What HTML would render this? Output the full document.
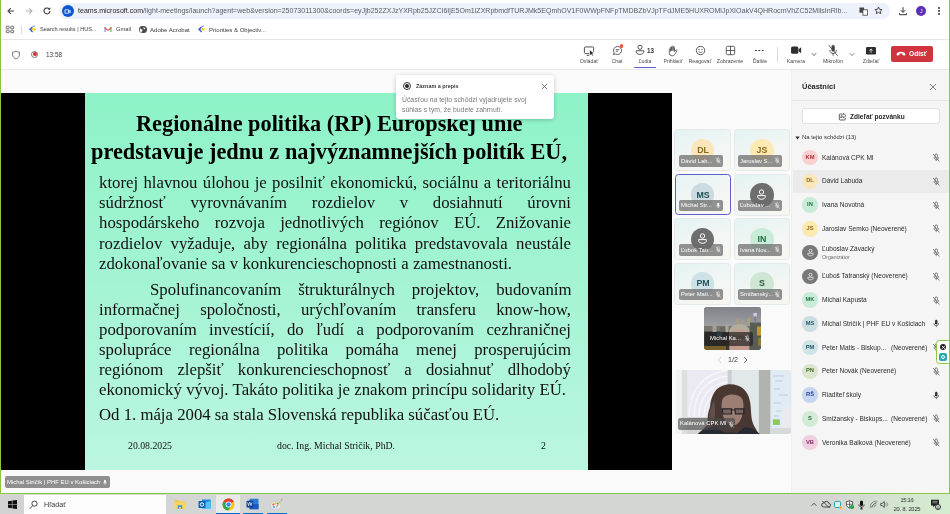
<!DOCTYPE html>
<html><head><meta charset="utf-8">
<style>
*{margin:0;padding:0;box-sizing:border-box}
html,body{width:950px;height:514px;overflow:hidden;background:#fff;font-family:"Liberation Sans",sans-serif;}
#root{position:relative;width:950px;height:514px;overflow:hidden;background:#fff}
.abs{position:absolute}
.t{position:absolute;white-space:nowrap;line-height:1}
.t,.tl,.st,.sh{will-change:transform}
/* browser chrome */
#chrome{left:0;top:0;width:950px;height:39px;background:#fff}
#urlbar{left:59px;top:2.500px;width:831px;height:16.500px;border-radius:8.300px;background:#edf1fa}
#bmline{left:0;top:39px;width:950px;height:1px;background:#e6e6e6}
/* teams bar */
#tbar{left:0;top:40px;width:950px;height:29px;background:#fff}
#tline{left:0;top:69px;width:950px;height:1px;background:#e9e9e9}
#stage{left:0;top:70px;width:791px;height:424px;background:#fafafa}
#black{left:1px;top:93px;width:671px;height:377.400px;background:#000}
#slide{left:85px;top:93px;width:503px;height:377.400px;background:linear-gradient(180deg,#8df3c7 0%,#a4f4d3 50%,#bbf6e0 100%)}
.tl{position:absolute;color:#4c4c4c;font-size:5.250px;line-height:1;white-space:nowrap;transform:translateX(-50%);top:59.100px}
/* slide text */
.st{position:absolute;left:14px;width:472px;font-family:"Liberation Serif",serif;color:#111;font-size:16.75px;line-height:1;white-space:nowrap;text-align:justify;text-align-last:justify}
.sh{position:absolute;font-family:"Liberation Serif",serif;font-weight:bold;color:#000;font-size:22.3px;line-height:1;white-space:nowrap}
/* tiles */
.tile{position:absolute;width:55px;height:41px;border-radius:3px;background:linear-gradient(135deg,#eaf6f3,#eef4f6);border:1px solid #e6ebea}
.av{position:absolute;border-radius:50%;text-align:center;font-weight:bold}
.chip{position:absolute;background:rgba(110,110,110,.85);border-radius:2px;color:#fff;font-size:5.2px;line-height:9px;height:9px;padding:0 2px;white-space:nowrap;overflow:hidden}
/* panel */
#panel{left:790.600px;top:70px;width:159.400px;height:424px;background:#f5f5f5;border-left:1px solid #f0f0f0}
.row{position:absolute;left:796px;width:148px;height:23px}
.pav{position:absolute;left:7px;top:4px;width:15px;height:15px;border-radius:50%;font-size:5.4px;font-weight:bold;line-height:15px;text-align:center}
.pn{position:absolute;left:26px;top:8.5px;font-size:6.3px;line-height:1;color:#333;white-space:nowrap}
.pm{position:absolute;left:137px;top:7px;width:8px;height:9px}
/* taskbar */
#task{left:0;top:494px;width:950px;height:20px;background:linear-gradient(90deg,#d4d6d4 0%,#d4d6d4 88%,#d3e8cf 96%,#d6ecd2 100%)}
</style></head><body><div id="root">

<!-- ============ BROWSER CHROME ============ -->
<div id="chrome" class="abs"></div>
<div id="urlbar" class="abs"></div>
<!-- nav icons -->
<svg class="abs" style="left:6px;top:6px" width="10" height="10" viewBox="0 0 10 10"><path d="M8 5H2.2M4.8 2.2L2 5l2.8 2.8" stroke="#444" stroke-width="1.1" fill="none"/></svg>
<svg class="abs" style="left:24px;top:6px" width="10" height="10" viewBox="0 0 10 10"><path d="M2 5h5.8M5.2 2.2L8 5 5.2 7.8" stroke="#b4b4b4" stroke-width="1.1" fill="none"/></svg>
<svg class="abs" style="left:41.5px;top:6px" width="10" height="10" viewBox="0 0 10 10"><path d="M8 5a3 3 0 1 1-1-2.3" stroke="#333" stroke-width="1.1" fill="none"/><path d="M8.3 1.3v2.5H5.8z" fill="#333"/></svg>
<div class="abs" style="left:61.800px;top:5px;width:12px;height:12px;border-radius:50%;background:#0b57d0"></div>
<svg class="abs" style="left:64.300px;top:7.500px" width="7" height="7" viewBox="0 0 7 7"><path d="M1 1.8h3.6v3.4H1zM4.6 3.5L6.2 2.3v2.4z" stroke="#fff" stroke-width=".8" fill="none"/></svg>
<div class="t" style="left:77.500px;top:7.400px;font-size:7.020px;color:#1f1f1f;letter-spacing:0.015px">teams.microsoft.com<span style="color:#5a5d62">/light-meetings/launch?agent=web&amp;version=25073011300&amp;coords=eyJjb252ZXJzYXRpb25JZCI6IjE5Om1lZXRpbmdfTURJMk5EQmhOV1F0WWpFNFpTMDBZbVJpTFdJME5HUXROMlJpXIOakV4QHRocmVhZC52MilsInRlb...</span></div>
<!-- translate / star -->
<svg class="abs" style="left:858.5px;top:6.5px" width="9" height="9" viewBox="0 0 9 9"><rect x=".5" y=".5" width="4.6" height="5.2" fill="#444"/><rect x="3.9" y="2.8" width="4.6" height="5.4" fill="#fff" stroke="#444" stroke-width=".8"/></svg>
<svg class="abs" style="left:874px;top:6px" width="9" height="9" viewBox="0 0 9 9"><path d="M4.5 1l1.05 2.3 2.5.25-1.9 1.65.55 2.45L4.5 6.4 2.3 7.65l.55-2.45L.95 3.55l2.5-.25z" stroke="#333" stroke-width=".85" fill="none" stroke-linejoin="round"/></svg>
<svg class="abs" style="left:898px;top:6px" width="10" height="10" viewBox="0 0 10 10"><path d="M5 1.2v5M2.8 4.2L5 6.4l2.2-2.2M1.5 7.2v1.5h7V7.2" stroke="#333" stroke-width="1" fill="none"/></svg>
<div class="abs" style="left:916.3px;top:5.8px;width:10px;height:10px;border-radius:50%;background:#5b2eb8;color:#fff;font-size:5px;line-height:10px;text-align:center">J</div>
<div class="abs" style="left:938.3px;top:7px;width:1.5px;height:1.5px;background:#444;border-radius:50%;box-shadow:0 3px 0 #444,0 6px 0 #444"></div>
<!-- bookmarks -->
<svg class="abs" style="left:5px;top:25px" width="10" height="9" viewBox="0 0 10 9"><g stroke="#555" stroke-width=".85" fill="none"><rect x="1.200" y="1.200" width="3" height="2.500" rx=".7"/><rect x="5.700" y="1.200" width="3" height="2.500" rx=".7"/><rect x="1.200" y="5.200" width="3" height="2.500" rx=".7"/><rect x="5.700" y="5.200" width="3" height="2.500" rx=".7"/></g></svg>
<div class="abs" style="left:21px;top:25.500px;width:1px;height:8px;background:#cdd9f3"></div>
<svg class="abs" style="left:28px;top:25.300px" width="9" height="9" viewBox="0 0 9 9"><path d="M1 4.2l3-2.6 1 .5-1.6 2.4 1.7 2.2-1 .7z" fill="#3b5bd0"/><path d="M3.8 3.2h4l-.5 2.2H4.6z" fill="#f5d400"/><path d="M4.5 1l2.4-.6-.8 1.5z" fill="#3b5bd0"/></svg>
<div class="t" style="left:39.5px;top:27.300px;font-size:5.580px;color:#3c3c3c">Search results | HUS...</div>
<svg class="abs" style="left:104px;top:26.300px" width="8" height="7" viewBox="0 0 8 7"><path d="M.6 6V1l1 .1v5z" fill="#4285f4"/><path d="M7.4 6V1l-1 .1v5z" fill="#34a853"/><path d="M.6 1L4 3.7 7.4 1l-.2 1.6L4 5 .8 2.6z" fill="#ea4335"/></svg>
<div class="t" style="left:115.5px;top:27.200px;font-size:5.750px;color:#3c3c3c">Gmail</div>
<div class="abs" style="left:139px;top:25.800px;width:7.6px;height:7.6px;border-radius:50%;background:#4a4a4a"></div>
<svg class="abs" style="left:139px;top:25.800px" width="7.6" height="7.6" viewBox="0 0 8 8"><path d="M1.2 2.6c1 .2 1.4 1 2.2 1.2.6.3.3 1.4-.4 1.6-.4.5-.2 1.6-.8 1.6C1 6 .4 4 1.2 2.600zM5 1c.2.7 1.300.7 1.500 1.500.5.700-.5 1.200-1 .9C4.700 3 4.300 1.800 5 1z" fill="#fff"/></svg>
<div class="t" style="left:149.5px;top:27.100px;font-size:6.050px;color:#3c3c3c">Adobe Acrobat</div>
<svg class="abs" style="left:197px;top:25.300px" width="9" height="9" viewBox="0 0 9 9"><path d="M1 4.2l3-2.6 1 .5-1.600 2.400 1.700 2.200-1 .7z" fill="#3b5bd0"/><path d="M3.8 3.200h4l-.5 2.200H4.600z" fill="#f5d400"/><path d="M4.500 1l2.400-.6-.8 1.500z" fill="#3b5bd0"/></svg>
<div class="t" style="left:208.5px;top:27.100px;font-size:6px;color:#3c3c3c">Priorities &amp; Objectiv...</div>
<div id="bmline" class="abs"></div>

<!-- ============ TEAMS BAR ============ -->
<div id="tbar" class="abs"></div>
<div id="tline" class="abs"></div>
<!-- left: shield, rec, time -->
<svg class="abs" style="left:11px;top:49.500px" width="10" height="10" viewBox="0 0 10 10"><path d="M5 1c1.200.8 2.300 1.100 3.400 1.200v2.600c0 2-1.500 3.300-3.400 4.200-1.900-.9-3.400-2.200-3.400-4.200V2.200C2.700 2.100 3.800 1.800 5 1z" stroke="#555" stroke-width=".8" fill="none"/></svg>
<div class="abs" style="left:30.800px;top:50.600px;width:7.600px;height:7.600px;border-radius:50%;border:1px solid #777"></div>
<div class="abs" style="left:32.600px;top:52.400px;width:4px;height:4px;border-radius:50%;background:#d92c2c"></div>
<div class="t" style="left:46.200px;top:52.100px;font-size:6.400px;color:#444">13:58</div>
<!-- toolbar icons -->
<svg class="abs" style="left:582.900px;top:44.800px" width="11.800" height="11.800" viewBox="0 0 11 11"><path d="M6 8H2.300a1 1 0 0 1-1-1V2.800a1 1 0 0 1 1-1h6.600a1 1 0 0 1 1 1v3.400M3.500 9.700h2.300" stroke="#444" stroke-width=".85" fill="none"/><path d="M6.300 4.800l3.700 3-1.600.2.900 1.600-.7.400-.9-1.600-1.100 1.100z" fill="#333"/></svg>
<div class="tl" style="left:589.400px">Ovládať</div>
<svg class="abs" style="left:611.500px;top:45px" width="11" height="11" viewBox="0 0 11 11"><path d="M5.500 1.500a4 4 0 1 1-1.900 7.500l-2.100.6.600-2A4 4 0 0 1 5.500 1.500z" stroke="#444" stroke-width=".85" fill="none"/><path d="M3.800 4.600h3.400M3.800 6.200h2.300" stroke="#444" stroke-width=".8"/></svg>
<div class="abs" style="left:619.700px;top:44.400px;width:3.200px;height:3.200px;border-radius:50%;background:#e8502f"></div>
<div class="tl" style="left:617px">Chat</div>
<svg class="abs" style="left:634px;top:44.300px" width="12" height="12" viewBox="0 0 11 11"><circle cx="5.500" cy="3" r="1.900" stroke="#444" stroke-width=".85" fill="none"/><path d="M2 6.200h7v.8c0 1.600-1.500 2.500-3.500 2.500S2 8.600 2 7z" stroke="#444" stroke-width=".85" fill="none"/></svg>
<div class="t" style="left:647.300px;top:47.600px;font-size:6.300px;font-weight:bold;color:#333">13</div>
<div class="tl" style="left:644.600px">Ľudia</div>
<div class="abs" style="left:633.500px;top:66.600px;width:22.500px;height:1.600px;border-radius:1px;background:#5b5fc7"></div>
<svg class="abs" style="left:666.500px;top:44.500px" width="11" height="12" viewBox="0 0 11 12"><path d="M3.300 6.500V2.600a.7.700 0 0 1 1.400 0V5.500M4.700 5.300V1.900a.7.700 0 0 1 1.400 0v3.400M6.100 5.300V2.400a.7.700 0 0 1 1.400 0v3.800M7.500 6.400l1.100-1.300a.7.700 0 0 1 1.100.9L8.300 8.800c-.7 1.300-1.600 2-3 2-1.800 0-3-1.200-3-3V4.600a.7.700 0 0 1 1.400 0" stroke="#444" stroke-width=".8" fill="none" stroke-linecap="round"/></svg>
<div class="tl" style="left:672.500px">Prihlásiť</div>
<svg class="abs" style="left:694.500px;top:45px" width="11" height="11" viewBox="0 0 11 11"><circle cx="5.500" cy="5.500" r="4.200" stroke="#444" stroke-width=".85" fill="none"/><circle cx="4" cy="4.400" r=".6" fill="#444"/><circle cx="7" cy="4.400" r=".6" fill="#444"/><path d="M3.600 6.600c1 1.200 2.800 1.200 3.800 0" stroke="#444" stroke-width=".8" fill="none"/></svg>
<div class="tl" style="left:700px">Reagovať</div>
<svg class="abs" style="left:724.500px;top:45px" width="11" height="11" viewBox="0 0 11 11"><rect x="1.300" y="1.300" width="8.400" height="8.400" rx="1.300" stroke="#444" stroke-width=".85" fill="none"/><path d="M5.500 1.300v8.400M1.300 5.500h8.400" stroke="#444" stroke-width=".85"/></svg>
<div class="tl" style="left:729.800px">Zobrazenie</div>
<div class="abs" style="left:755.300px;top:49.700px;width:1.800px;height:1.800px;border-radius:50%;background:#333;box-shadow:3.300px 0 0 #333,6.600px 0 0 #333"></div>
<div class="tl" style="left:759.500px">Ďalšie</div>
<div class="abs" style="left:777px;top:46.500px;width:1px;height:15.500px;background:#dcdcdc"></div>
<svg class="abs" style="left:790px;top:45.300px" width="12.500" height="10.400" viewBox="0 0 12 10"><rect x="1" y="1.500" width="7" height="7" rx="1.500" fill="#2e2e2e"/><path d="M8.300 4l2.400-1.900v5.800L8.300 6z" fill="#2e2e2e"/></svg>
<div class="tl" style="left:795.800px">Kamera</div>
<svg class="abs" style="left:810.500px;top:51.500px" width="6" height="5" viewBox="0 0 6 5"><path d="M.8 1.200L3 3.600l2.200-2.400" stroke="#444" stroke-width=".8" fill="none"/></svg>
<svg class="abs" style="left:827.300px;top:44px" width="12.300" height="13.400" viewBox="0 0 11 12"><rect x="4" y="1" width="3" height="5.800" rx="1.500" fill="#444"/><path d="M2.600 5.500c0 1.800 1.200 3 2.900 3s2.900-1.200 2.900-3M5.500 8.500v2" stroke="#444" stroke-width=".8" fill="none"/><path d="M1.500 1l8 9.500" stroke="#444" stroke-width=".8"/></svg>
<div class="tl" style="left:833.400px">Mikrofón</div>
<svg class="abs" style="left:848.500px;top:51.500px" width="6" height="5" viewBox="0 0 6 5"><path d="M.8 1.200L3 3.600l2.200-2.400" stroke="#555" stroke-width=".7" fill="none"/></svg>
<svg class="abs" style="left:865px;top:45.500px" width="12" height="10" viewBox="0 0 12 10"><rect x="1" y="1" width="10" height="7.600" rx="1.300" fill="#2e2e2e"/><path d="M6 6.800V3M4.400 4.500L6 2.900l1.600 1.600" stroke="#fff" stroke-width=".8" fill="none"/></svg>
<div class="tl" style="left:871px">Zdieľať</div>
<div class="abs" style="left:890.600px;top:46.400px;width:42.600px;height:15.400px;border-radius:2px;background:#d0343f"></div>
<svg class="abs" style="left:896px;top:51px" width="10" height="6" viewBox="0 0 10 6"><path d="M.6 3.600C.5 1.800 2.800.8 5 .8s4.500 1 4.400 2.800c0 .8-.4 1.100-1 1l-1.300-.3c-.5-.1-.7-.5-.7-1.100v-.6c-.9-.3-1.900-.3-2.800 0v.6c0 .6-.2 1-.7 1.100l-1.300.3c-.6.100-1-.2-1-1z" fill="#fff"/></svg>
<div class="t" style="left:909.300px;top:50.800px;font-size:6.600px;font-weight:bold;color:#fff">Odísť</div>

<!-- ============ STAGE ============ -->
<div id="stage" class="abs"></div>
<div id="black" class="abs"></div>
<div id="slide" class="abs">
<div class="sh" style="left:50.5px;top:20.2px;width:386.5px;text-align-last:justify">Regionálne politika (RP) Európskej únie</div>
<div class="sh" style="left:6px;top:47.6px;width:476px;text-align-last:justify">predstavuje jednu z najvýznamnejších politík EÚ,</div>
<div class="st" style="top:82.0px">ktorej hlavnou úlohou je posilniť ekonomickú, sociálnu a teritoriálnu</div>
<div class="st" style="top:102.0px">súdržnosť vyrovnávaním rozdielov v dosiahnutí úrovni</div>
<div class="st" style="top:122.0px">hospodárskeho rozvoja jednotlivých regiónov EÚ. Znižovanie</div>
<div class="st" style="top:143px">rozdielov vyžaduje, aby regionálna politika predstavovala neustále</div>
<div class="st" style="top:163px;width:413px">zdokonaľovanie sa v konkurencieschopnosti a zamestnanosti.</div>
<div class="st" style="top:189px;left:64.500px;width:421.500px">Spolufinancovaním štrukturálnych projektov, budovaním</div>
<div class="st" style="top:209px">informačnej spoločnosti, urýchľovaním transferu know-how,</div>
<div class="st" style="top:229px">podporovaním investícií, do ľudí a podporovaním cezhraničnej</div>
<div class="st" style="top:249px">spolupráce regionálna politika pomáha menej prosperujúcim</div>
<div class="st" style="top:269px">regiónom zlepšiť konkurencieschopnosť a dosiahnuť dlhodobý</div>
<div class="st" style="top:289px;width:467px">ekonomický vývoj. Takáto politika je znakom princípu solidarity EÚ.</div>
<div class="st" style="top:314px;width:400px">Od 1. mája 2004 sa stala Slovenská republika súčasťou EÚ.</div>
<div class="st" style="top:348.400px;left:42.7px;width:43.8px;font-size:9.75px">20.08.2025</div>
<div class="st" style="top:348.400px;left:192.3px;width:118px;font-size:9.75px">doc. Ing. Michal Stričík, PhD.</div>
<div class="st" style="top:348.400px;left:455.5px;width:5px;font-size:9.75px">2</div>
</div>
<!-- popup -->
<div class="abs" style="left:396px;top:74.5px;width:158px;height:44px;background:#fff;border-radius:3.5px;box-shadow:0 1px 4px rgba(0,0,0,.22)"></div>
<div class="abs" style="left:403px;top:82px;width:8.4px;height:8.4px;border-radius:50%;border:1px solid #333"></div>
<div class="abs" style="left:405px;top:84px;width:4.4px;height:4.4px;border-radius:50%;background:#222"></div>
<div class="t" style="left:416.300px;top:83.900px;font-size:5.450px;font-weight:bold;color:#3a3a3a">Záznam a prepis</div>
<svg class="abs" style="left:540.5px;top:82.5px" width="7" height="7" viewBox="0 0 7 7"><path d="M0.8 0.8L6.2 6.2M6.2 0.8L0.8 6.2" stroke="#555" stroke-width="0.8" fill="none"/></svg>
<div class="t" style="left:402.3px;top:97.100px;font-size:6.850px;color:#7a7a7a">Účasťou na tejto schôdzi vyjadrujete svoj</div>
<div class="t" style="left:402.3px;top:106.700px;font-size:6.850px;color:#7a7a7a">súhlas s tým, že budete zahrnutí.</div>

<!-- ============ PANEL ============ -->
<div class="abs" style="left:674.4px;top:129.4px;width:56.8px;height:41.5px;border-radius:3.5px;border:1px solid #e4eaea;background:linear-gradient(160deg,#e4f3f3,#f2f6f4 55%,#f8f6f1)"></div>
<div class="abs" style="left:690.8px;top:138.6px;width:23.6px;height:23.6px;border-radius:50%;background:#fbe5bb"></div>
<div class="t" style="left:687.6px;top:145.8px;width:30px;text-align:center;font-size:8.8px;font-weight:bold;color:#8a6a1c">DL</div>
<div class="abs" style="left:678.7px;top:155.0px;width:44.2px;height:11.7px;border-radius:2px;background:rgba(108,108,108,.74)"></div>
<div class="t" style="left:680.7px;top:158.6px;font-size:5.9px;color:#fff">Dávid Lab...</div>
<svg class="abs" style="left:715.0px;top:157.2px" width="6.5" height="7.2" viewBox="0 0 10 11"><rect x="3.7" y="1" width="2.6" height="5.2" rx="1.3" fill="none" stroke="#fff" stroke-width=".8"/><path d="M2.3 5c0 1.700 1.100 2.800 2.700 2.800S7.700 6.700 7.700 5M5 7.800v1.800" stroke="#fff" stroke-width=".8" fill="none"/><path d="M1.300 1.200l7.400 8.800" stroke="#fff" stroke-width=".8"/></svg>
<div class="abs" style="left:733.6px;top:129.4px;width:56.8px;height:41.5px;border-radius:3.5px;border:1px solid #e4eaea;background:linear-gradient(160deg,#e4f3f3,#f2f6f4 55%,#f8f6f1)"></div>
<div class="abs" style="left:750.0px;top:138.6px;width:23.6px;height:23.6px;border-radius:50%;background:#fce9b4"></div>
<div class="t" style="left:746.8px;top:145.8px;width:30px;text-align:center;font-size:8.8px;font-weight:bold;color:#8a6a1c">JS</div>
<div class="abs" style="left:737.9px;top:155.0px;width:44.2px;height:11.7px;border-radius:2px;background:rgba(108,108,108,.74)"></div>
<div class="t" style="left:739.9px;top:158.6px;font-size:5.9px;color:#fff">Jaroslav S...</div>
<svg class="abs" style="left:774.2px;top:157.2px" width="6.5" height="7.2" viewBox="0 0 10 11"><rect x="3.7" y="1" width="2.6" height="5.2" rx="1.3" fill="none" stroke="#fff" stroke-width=".8"/><path d="M2.3 5c0 1.700 1.100 2.800 2.700 2.800S7.700 6.700 7.700 5M5 7.800v1.800" stroke="#fff" stroke-width=".8" fill="none"/><path d="M1.300 1.200l7.400 8.800" stroke="#fff" stroke-width=".8"/></svg>
<div class="abs" style="left:674.6px;top:174.3px;width:56.4px;height:41.1px;border-radius:3.5px;border:1.8px solid #5b5fc7;background:linear-gradient(160deg,#e6f4f3,#f4f6f4 60%,#f8f6f2)"></div>
<div class="abs" style="left:690.8px;top:183.3px;width:23.6px;height:23.6px;border-radius:50%;background:#ccdbe0"></div>
<div class="t" style="left:687.6px;top:190.5px;width:30px;text-align:center;font-size:8.8px;font-weight:bold;color:#1f4d58">MS</div>
<div class="abs" style="left:678.7px;top:199.7px;width:44.2px;height:11.7px;border-radius:2px;background:rgba(108,108,108,.74)"></div>
<div class="t" style="left:680.7px;top:203.3px;font-size:5.9px;color:#fff">Michal Str...</div>
<svg class="abs" style="left:715.0px;top:201.9px" width="6.5" height="7.2" viewBox="0 0 10 11"><rect x="3.5" y="1" width="3" height="5.600" rx="1.500" fill="#fff"/><path d="M2.300 5c0 1.700 1.100 2.800 2.700 2.800S7.700 6.700 7.700 5M5 7.800v1.800" stroke="#fff" stroke-width=".8" fill="none"/></svg>
<div class="abs" style="left:733.6px;top:174.1px;width:56.8px;height:41.5px;border-radius:3.5px;border:1px solid #e4eaea;background:linear-gradient(160deg,#e4f3f3,#f2f6f4 55%,#f8f6f1)"></div>
<div class="abs" style="left:750.0px;top:183.3px;width:23.6px;height:23.6px;border-radius:50%;background:#6e6e6e"></div>
<svg style="position:absolute;left:755.3px;top:188.1px" width="13" height="13" viewBox="0 0 12 12"><circle cx="6" cy="3.700" r="2" stroke="#fff" stroke-width=".9" fill="none"/><path d="M2.500 7h7v1c0 1.500-1.500 2.400-3.500 2.400S2.500 9.500 2.500 8z" stroke="#fff" stroke-width=".9" fill="none"/></svg>
<div class="abs" style="left:737.9px;top:199.7px;width:44.2px;height:11.7px;border-radius:2px;background:rgba(108,108,108,.74)"></div>
<div class="t" style="left:739.9px;top:203.3px;font-size:5.9px;color:#fff">Ľuboslav ...</div>
<svg class="abs" style="left:774.2px;top:201.9px" width="6.5" height="7.2" viewBox="0 0 10 11"><rect x="3.7" y="1" width="2.6" height="5.2" rx="1.3" fill="none" stroke="#fff" stroke-width=".8"/><path d="M2.3 5c0 1.700 1.100 2.800 2.700 2.800S7.700 6.700 7.700 5M5 7.800v1.800" stroke="#fff" stroke-width=".8" fill="none"/><path d="M1.300 1.200l7.400 8.800" stroke="#fff" stroke-width=".8"/></svg>
<div class="abs" style="left:674.4px;top:218.4px;width:56.8px;height:41.5px;border-radius:3.5px;border:1px solid #e4eaea;background:linear-gradient(160deg,#e4f3f3,#f2f6f4 55%,#f8f6f1)"></div>
<div class="abs" style="left:690.8px;top:227.6px;width:23.6px;height:23.6px;border-radius:50%;background:#6e6e6e"></div>
<svg style="position:absolute;left:696.1px;top:232.4px" width="13" height="13" viewBox="0 0 12 12"><circle cx="6" cy="3.700" r="2" stroke="#fff" stroke-width=".9" fill="none"/><path d="M2.500 7h7v1c0 1.500-1.500 2.400-3.500 2.400S2.500 9.500 2.500 8z" stroke="#fff" stroke-width=".9" fill="none"/></svg>
<div class="abs" style="left:678.7px;top:244.0px;width:44.2px;height:11.7px;border-radius:2px;background:rgba(108,108,108,.74)"></div>
<div class="t" style="left:680.7px;top:247.6px;font-size:5.9px;color:#fff">Ľuboš Tatr...</div>
<svg class="abs" style="left:715.0px;top:246.2px" width="6.5" height="7.2" viewBox="0 0 10 11"><rect x="3.7" y="1" width="2.6" height="5.2" rx="1.3" fill="none" stroke="#fff" stroke-width=".8"/><path d="M2.3 5c0 1.700 1.100 2.800 2.700 2.800S7.700 6.700 7.700 5M5 7.800v1.800" stroke="#fff" stroke-width=".8" fill="none"/><path d="M1.300 1.200l7.400 8.800" stroke="#fff" stroke-width=".8"/></svg>
<div class="abs" style="left:733.6px;top:218.4px;width:56.8px;height:41.5px;border-radius:3.5px;border:1px solid #e4eaea;background:linear-gradient(160deg,#e4f3f3,#f2f6f4 55%,#f8f6f1)"></div>
<div class="abs" style="left:750.0px;top:227.6px;width:23.6px;height:23.6px;border-radius:50%;background:#c8ecd8"></div>
<div class="t" style="left:746.8px;top:234.8px;width:30px;text-align:center;font-size:8.8px;font-weight:bold;color:#1f6f3d">IN</div>
<div class="abs" style="left:737.9px;top:244.0px;width:44.2px;height:11.7px;border-radius:2px;background:rgba(108,108,108,.74)"></div>
<div class="t" style="left:739.9px;top:247.6px;font-size:5.9px;color:#fff">Ivana Nov...</div>
<svg class="abs" style="left:774.2px;top:246.2px" width="6.5" height="7.2" viewBox="0 0 10 11"><rect x="3.7" y="1" width="2.6" height="5.2" rx="1.3" fill="none" stroke="#fff" stroke-width=".8"/><path d="M2.3 5c0 1.700 1.100 2.800 2.700 2.800S7.700 6.700 7.700 5M5 7.800v1.800" stroke="#fff" stroke-width=".8" fill="none"/><path d="M1.300 1.200l7.400 8.800" stroke="#fff" stroke-width=".8"/></svg>
<div class="abs" style="left:674.4px;top:263.0px;width:56.8px;height:41.5px;border-radius:3.5px;border:1px solid #e4eaea;background:linear-gradient(160deg,#e4f3f3,#f2f6f4 55%,#f8f6f1)"></div>
<div class="abs" style="left:690.8px;top:272.2px;width:23.6px;height:23.6px;border-radius:50%;background:#cde1e6"></div>
<div class="t" style="left:687.6px;top:279.4px;width:30px;text-align:center;font-size:8.8px;font-weight:bold;color:#245560">PM</div>
<div class="abs" style="left:678.7px;top:288.6px;width:44.2px;height:11.7px;border-radius:2px;background:rgba(108,108,108,.74)"></div>
<div class="t" style="left:680.7px;top:292.2px;font-size:5.9px;color:#fff">Peter Mati...</div>
<svg class="abs" style="left:715.0px;top:290.8px" width="6.5" height="7.2" viewBox="0 0 10 11"><rect x="3.7" y="1" width="2.6" height="5.2" rx="1.3" fill="none" stroke="#fff" stroke-width=".8"/><path d="M2.3 5c0 1.700 1.100 2.800 2.700 2.800S7.700 6.700 7.700 5M5 7.800v1.800" stroke="#fff" stroke-width=".8" fill="none"/><path d="M1.300 1.200l7.400 8.800" stroke="#fff" stroke-width=".8"/></svg>
<div class="abs" style="left:733.6px;top:263.0px;width:56.8px;height:41.5px;border-radius:3.5px;border:1px solid #e4eaea;background:linear-gradient(160deg,#e4f3f3,#f2f6f4 55%,#f8f6f1)"></div>
<div class="abs" style="left:750.0px;top:272.2px;width:23.6px;height:23.6px;border-radius:50%;background:#d0e6d5"></div>
<div class="t" style="left:746.8px;top:279.4px;width:30px;text-align:center;font-size:8.8px;font-weight:bold;color:#2a5c35">S</div>
<div class="abs" style="left:737.9px;top:288.6px;width:44.2px;height:11.7px;border-radius:2px;background:rgba(108,108,108,.74)"></div>
<div class="t" style="left:739.9px;top:292.2px;font-size:5.9px;color:#fff">Smižanský...</div>
<svg class="abs" style="left:774.2px;top:290.8px" width="6.5" height="7.2" viewBox="0 0 10 11"><rect x="3.7" y="1" width="2.6" height="5.2" rx="1.3" fill="none" stroke="#fff" stroke-width=".8"/><path d="M2.3 5c0 1.700 1.100 2.800 2.700 2.800S7.700 6.700 7.700 5M5 7.800v1.800" stroke="#fff" stroke-width=".8" fill="none"/><path d="M1.300 1.200l7.400 8.800" stroke="#fff" stroke-width=".8"/></svg>
<div class="abs" style="left:703.8px;top:307.1px;width:57.2px;height:42.6px;border-radius:3px;overflow:hidden;background:#88898e">
<svg width="57.2" height="42.6" viewBox="0 0 57.2 42.6" style="position:absolute;left:0;top:0">
<defs><filter id="b1" x="-10%" y="-10%" width="120%" height="120%"><feGaussianBlur stdDeviation="0.55"/></filter>
<linearGradient id="w1" x1="0" y1="0" x2="0" y2="1"><stop offset="0" stop-color="#7f8086"/><stop offset="1" stop-color="#a2a3a6"/></linearGradient></defs>
<g filter="url(#b1)">
<rect x="-2" y="-2" width="62" height="24" fill="url(#w1)"/>
<rect x="-2" y="19" width="62" height="26" fill="#77776f"/>
<rect x="-2" y="24.500" width="27" height="20" fill="#3b3936"/>
<rect x="-2" y="39" width="24" height="6" fill="#75602c"/>
<rect x="13" y="25.500" width="5" height="4" fill="#4c7db3"/>
<rect x="8.500" y="16" width="4" height="9" fill="#a29f96"/>
<rect x="21.500" y="17.500" width="3" height="8" fill="#aaa698"/>
<rect x="16" y="20" width="5" height="5" fill="#6b6a64"/>
<rect x="46" y="15.500" width="13" height="30" fill="#585c54"/>
<rect x="53" y="19.500" width="5" height="9" fill="#b99b2e"/>
<rect x="54" y="31" width="4" height="8" fill="#8a7a30"/>
<rect x="32.300" y="11.500" width="2" height="6" fill="#a89d80"/>
<rect x="37.500" y="13" width="1.800" height="4.500" fill="#a99e80"/>
<rect x="43.800" y="10.500" width="2.200" height="7" fill="#ada078"/>
<rect x="49.500" y="6" width="3.400" height="3.600" fill="#c9cde6"/>
<rect x="50.500" y="9.500" width="1.500" height="7" fill="#7d7f86"/>
<path d="M25.500 30c-.8-8 3-12.500 10-12.500s10.500 4.500 9.800 12.500l-.5 14h-19z" fill="#bfa091"/>
<path d="M25.300 27c-.5-6.500 3.500-9.800 10.200-9.800s10.600 3.300 10 9.800c-2-3.500-5-4.800-10-4.800s-8.200 1.300-10.200 4.800z" fill="#b3ad9d"/>
<rect x="28" y="28.500" width="15" height="3.500" fill="#a58576"/>
<rect x="27" y="36" width="17" height="7" fill="#c79a8e"/>
</g>
</svg></div>
<div class="abs" style="left:704.5px;top:332px;width:48.3px;height:13.6px;border-radius:2px;background:rgba(34,34,34,.7)"></div>
<div class="t" style="left:709.7px;top:336px;font-size:5.9px;color:#fff">Michal Ka...</div>

<svg class="abs" style="left:743.5px;top:334.8px" width="6.5" height="7.2" viewBox="0 0 10 11"><rect x="3.7" y="1" width="2.6" height="5.2" rx="1.3" fill="none" stroke="#fff" stroke-width=".8"/><path d="M2.3 5c0 1.700 1.100 2.800 2.700 2.800S7.700 6.700 7.700 5M5 7.800v1.800" stroke="#fff" stroke-width=".8" fill="none"/><path d="M1.300 1.200l7.400 8.800" stroke="#fff" stroke-width=".8"/></svg>
<svg class="abs" style="left:716.5px;top:355.5px" width="5" height="8" viewBox="0 0 5 8"><path d="M4 1L1 4l3 3" stroke="#c4c4c4" stroke-width=".8" fill="none"/></svg>
<div class="t" style="left:727.6px;top:356.2px;font-size:7.2px;color:#444">1/2</div>
<svg class="abs" style="left:743px;top:355.5px" width="5" height="8" viewBox="0 0 5 8"><path d="M1 1l3 3-3 3" stroke="#555" stroke-width=".8" fill="none"/></svg>
<div class="abs" style="left:675.9px;top:369.5px;width:114.8px;height:64.2px;border-radius:3px;overflow:hidden;background:#e2e5e8">
<svg width="114.8" height="64.2" viewBox="0 0 114.8 64.2" style="position:absolute;left:0;top:0">
<defs><filter id="b2" x="-10%" y="-10%" width="120%" height="120%"><feGaussianBlur stdDeviation="0.6"/></filter></defs>
<g filter="url(#b2)">
<rect x="-2" y="-2" width="8" height="68" fill="#f1f3f3"/>
<rect x="5.800" y="-2" width="5.600" height="68" fill="#dddfdf"/>
<rect x="11.200" y="-2" width="41" height="50" fill="#ebeaf3"/>
<g stroke="#f7f6fb" stroke-width="1.300" fill="none"><path d="M13 48C13 20 26 4 52 0M18 48C18 24 29 9 52 6M23 48C23 28 33 14 52 12M28 48C28 32 36 20 52 18M33 48C33 36 40 26 52 24"/></g>
<rect x="11.200" y="47" width="41" height="19" fill="#d3d5d3"/>
<rect x="51.700" y="-2" width="32" height="68" fill="#e2e7ea"/>
<rect x="51.700" y="-2" width="4" height="32" fill="#cbcfce"/>
<rect x="82.900" y="-2" width="11.800" height="68" fill="#b1b3af"/>
<rect x="94.500" y="-2" width="22" height="68" fill="#e1ebf3"/>
<g stroke="#b4cbe6" stroke-width=".9" fill="none"><path d="M97 6h11M99 11h8M98 19h6M103 25h9M97 33h8M100 41h6M98 46h5"/></g>
<rect x="105.400" y="36.900" width="11" height="21" fill="#e8ecee"/>
<rect x="96.900" y="49.400" width="7" height="5.500" fill="#8fc75a"/>
<rect x="94.500" y="58" width="22" height="8" fill="#d7dadb"/>
<path d="M22 66c2-5 7-8 10-12-1-6 0-12 2-17 1-12 6-21 17-22.500 12-1.500 21 5 23 17 1.500 8 .5 15 3 22 1 3 4 6 6 12.500z" fill="#493833"/>
<path d="M24 64c3-5 7-7 9-11 0-8 1-16 5-22 2 8 1 20-2 28z" fill="#6a5650" opacity=".8"/>
<path d="M45.500 36c0-9 4-13.500 10.500-13.500S67.500 27 67.500 36c0 10-3.500 19-10.500 19.500S45.500 46 45.500 36z" fill="#9d7e73"/>
<path d="M44 32c1-9 6-13 12-13s11 3.500 12.500 11c-4-4-8-5.500-12.500-5.500S47 26.500 44 32z" fill="#493833"/>
<path d="M46 38.800h9.500v5.200h-8.500zM59 38.800h9v5h-8.500z" stroke="#27252a" stroke-width="1.200" fill="rgba(70,60,70,.4)"/>
<path d="M55.500 40h3.500" stroke="#27252a" stroke-width="1"/>
<path d="M20 66c4-6 13-8.500 19-9.500l9 6 13 .5 8-6c7 1 13 3.500 16 9z" fill="#282931"/>
</g>
</svg></div>
<div class="abs" style="left:678.1px;top:418.4px;width:57.3px;height:11.6px;border-radius:2px;background:rgba(70,70,70,.62)"></div>
<div class="t" style="left:680px;top:421.4px;font-size:5.9px;color:#fff">Kalánová CPK MI</div>

<svg class="abs" style="left:728px;top:420.6px" width="6.5" height="7.2" viewBox="0 0 10 11"><rect x="3.7" y="1" width="2.6" height="5.2" rx="1.3" fill="none" stroke="#fff" stroke-width=".8"/><path d="M2.3 5c0 1.700 1.100 2.800 2.700 2.800S7.700 6.700 7.700 5M5 7.800v1.800" stroke="#fff" stroke-width=".8" fill="none"/><path d="M1.300 1.200l7.400 8.800" stroke="#fff" stroke-width=".8"/></svg>
<div class="abs" style="left:5.2px;top:476.2px;width:104.5px;height:11.5px;border-radius:2px;background:#8f8f8f"></div>
<div class="t" style="left:7px;top:480.2px;font-size:5.93px;color:#fff">Michal Stričík | PHF EU v Košiciach</div>
<svg class="abs" style="left:101.8px;top:478.9px" width="6" height="7" viewBox="0 0 10 11"><rect x="3.5" y="1" width="3" height="5.600" rx="1.500" fill="#fff"/><path d="M2.300 5c0 1.700 1.100 2.800 2.700 2.800S7.700 6.700 7.700 5M5 7.800v1.800" stroke="#fff" stroke-width=".8" fill="none"/></svg>
<div id="panel" class="abs"></div>
<div class="t" style="left:802.1px;top:83px;font-size:7.47px;font-weight:bold;color:#242424">Účastníci</div>
<svg class="abs" style="left:928.5px;top:82.7px" width="8" height="8" viewBox="0 0 8 8"><path d="M1 1l6 6M7 1L1 7" stroke="#555" stroke-width=".75" fill="none"/></svg>
<div class="abs" style="left:792px;top:100px;width:157px;height:1px;background:#e6e6e6"></div>
<div class="abs" style="left:802.2px;top:108.2px;width:137.5px;height:15.6px;border-radius:2px;background:#fff;border:1px solid #e2e2e2"></div>
<svg class="abs" style="left:837.5px;top:112px" width="9" height="9" viewBox="0 0 9 9"><path d="M4 2H2.300A1 1 0 0 0 1.300 3v4a1 1 0 0 0 1 1h4a1 1 0 0 0 1-1V6" stroke="#333" stroke-width=".8" fill="none"/><path d="M5.300 1.200L8 3.600 5.300 6V4.600C4 4.600 3.300 5 2.800 6c0-2 1-3.200 2.500-3.400z" stroke="#333" stroke-width=".7" fill="none" stroke-linejoin="round"/></svg>
<div class="t" style="left:849.9px;top:114px;font-size:6.54px;font-weight:bold;color:#242424">Zdieľať pozvánku</div>
<svg class="abs" style="left:795px;top:135.6px" width="5" height="4" viewBox="0 0 5 4"><path d="M.3.500h4.400L2.500 3.600z" fill="#333"/></svg>
<div class="t" style="left:802.2px;top:134.5px;font-size:5.92px;color:#333">Na tejto schôdzi (13)</div>
<div class="abs" style="left:802.2px;top:149.7px;width:15.6px;height:15.6px;border-radius:50%;background:#f9d0d0"></div>
<div class="t" style="left:800px;top:154.6px;width:20px;text-align:center;font-size:5.8px;font-weight:bold;color:#b23038">KM</div>
<div class="t" style="left:821.8px;top:154.6px;font-size:6.55px;color:#2c2c2c">Kalánová CPK MI</div>
<svg class="abs" style="left:931.8px;top:153.0px" width="8.5" height="9.3" viewBox="0 0 10 11"><rect x="3.7" y="1" width="2.6" height="5.2" rx="1.3" fill="none" stroke="#555" stroke-width=".8"/><path d="M2.3 5c0 1.700 1.100 2.800 2.700 2.800S7.700 6.700 7.700 5M5 7.800v1.800" stroke="#555" stroke-width=".8" fill="none"/><path d="M1.300 1.200l7.400 8.800" stroke="#555" stroke-width=".8"/></svg>
<div class="abs" style="left:793px;top:170.0px;width:155.5px;height:22.6px;background:#ebebeb"></div>
<div class="abs" style="left:802.2px;top:173.5px;width:15.6px;height:15.6px;border-radius:50%;background:#fbe5bb"></div>
<div class="t" style="left:800px;top:178.4px;width:20px;text-align:center;font-size:5.8px;font-weight:bold;color:#8a6a1c">DL</div>
<div class="t" style="left:821.8px;top:178.4px;font-size:6.55px;color:#2c2c2c">Dávid Labuda</div>
<svg class="abs" style="left:931.8px;top:176.8px" width="8.5" height="9.3" viewBox="0 0 10 11"><rect x="3.7" y="1" width="2.6" height="5.2" rx="1.3" fill="none" stroke="#555" stroke-width=".8"/><path d="M2.3 5c0 1.700 1.100 2.800 2.700 2.800S7.700 6.700 7.700 5M5 7.800v1.800" stroke="#555" stroke-width=".8" fill="none"/><path d="M1.300 1.200l7.400 8.800" stroke="#555" stroke-width=".8"/></svg>
<div class="abs" style="left:802.2px;top:197.2px;width:15.6px;height:15.6px;border-radius:50%;background:#c8ecd8"></div>
<div class="t" style="left:800px;top:202.1px;width:20px;text-align:center;font-size:5.8px;font-weight:bold;color:#1f7a42">IN</div>
<div class="t" style="left:821.8px;top:202.1px;font-size:6.55px;color:#2c2c2c">Ivana Novotná</div>
<svg class="abs" style="left:931.8px;top:200.5px" width="8.5" height="9.3" viewBox="0 0 10 11"><rect x="3.7" y="1" width="2.6" height="5.2" rx="1.3" fill="none" stroke="#555" stroke-width=".8"/><path d="M2.3 5c0 1.700 1.100 2.800 2.700 2.800S7.700 6.700 7.700 5M5 7.800v1.800" stroke="#555" stroke-width=".8" fill="none"/><path d="M1.300 1.200l7.400 8.800" stroke="#555" stroke-width=".8"/></svg>
<div class="abs" style="left:802.2px;top:221.0px;width:15.6px;height:15.6px;border-radius:50%;background:#fce9b0"></div>
<div class="t" style="left:800px;top:225.9px;width:20px;text-align:center;font-size:5.8px;font-weight:bold;color:#8a6a1c">JS</div>
<div class="t" style="left:821.8px;top:225.9px;font-size:6.55px;color:#2c2c2c">Jaroslav Semko (Neoverené)</div>
<svg class="abs" style="left:931.8px;top:224.3px" width="8.5" height="9.3" viewBox="0 0 10 11"><rect x="3.7" y="1" width="2.6" height="5.2" rx="1.3" fill="none" stroke="#555" stroke-width=".8"/><path d="M2.3 5c0 1.700 1.100 2.800 2.700 2.800S7.700 6.700 7.700 5M5 7.800v1.800" stroke="#555" stroke-width=".8" fill="none"/><path d="M1.300 1.200l7.400 8.800" stroke="#555" stroke-width=".8"/></svg>
<div class="abs" style="left:802.2px;top:244.7px;width:15.6px;height:15.6px;border-radius:50%;background:#787878"></div>
<svg style="position:absolute;left:805.5px;top:247.7px" width="9" height="9" viewBox="0 0 12 12"><circle cx="6" cy="3.700" r="2" stroke="#fff" stroke-width=".9" fill="none"/><path d="M2.500 7h7v1c0 1.500-1.500 2.400-3.500 2.400S2.500 9.500 2.500 8z" stroke="#fff" stroke-width=".9" fill="none"/></svg>
<div class="t" style="left:821.8px;top:245.9px;font-size:6.55px;color:#2c2c2c">Ľuboslav Závacký</div>
<div class="t" style="left:821.8px;top:254.8px;font-size:5.3px;color:#6a6a6a">Organizátor</div>
<svg class="abs" style="left:931.8px;top:248.0px" width="8.5" height="9.3" viewBox="0 0 10 11"><rect x="3.7" y="1" width="2.6" height="5.2" rx="1.3" fill="none" stroke="#555" stroke-width=".8"/><path d="M2.3 5c0 1.700 1.100 2.800 2.700 2.800S7.700 6.700 7.700 5M5 7.800v1.800" stroke="#555" stroke-width=".8" fill="none"/><path d="M1.300 1.200l7.400 8.800" stroke="#555" stroke-width=".8"/></svg>
<div class="abs" style="left:802.2px;top:268.5px;width:15.6px;height:15.6px;border-radius:50%;background:#787878"></div>
<svg style="position:absolute;left:805.5px;top:271.5px" width="9" height="9" viewBox="0 0 12 12"><circle cx="6" cy="3.700" r="2" stroke="#fff" stroke-width=".9" fill="none"/><path d="M2.500 7h7v1c0 1.500-1.500 2.400-3.500 2.400S2.500 9.500 2.500 8z" stroke="#fff" stroke-width=".9" fill="none"/></svg>
<div class="t" style="left:821.8px;top:273.4px;font-size:6.55px;color:#2c2c2c">Ľuboš Tatranský (Neoverené)</div>
<svg class="abs" style="left:931.8px;top:271.8px" width="8.5" height="9.3" viewBox="0 0 10 11"><rect x="3.7" y="1" width="2.6" height="5.2" rx="1.3" fill="none" stroke="#555" stroke-width=".8"/><path d="M2.3 5c0 1.700 1.100 2.800 2.700 2.800S7.700 6.700 7.700 5M5 7.800v1.800" stroke="#555" stroke-width=".8" fill="none"/><path d="M1.300 1.200l7.400 8.800" stroke="#555" stroke-width=".8"/></svg>
<div class="abs" style="left:802.2px;top:292.3px;width:15.6px;height:15.6px;border-radius:50%;background:#c9ecd9"></div>
<div class="t" style="left:800px;top:297.2px;width:20px;text-align:center;font-size:5.8px;font-weight:bold;color:#2a7a4a">MK</div>
<div class="t" style="left:821.8px;top:297.2px;font-size:6.55px;color:#2c2c2c">Michal Kapusta</div>
<svg class="abs" style="left:931.8px;top:295.6px" width="8.5" height="9.3" viewBox="0 0 10 11"><rect x="3.7" y="1" width="2.6" height="5.2" rx="1.3" fill="none" stroke="#555" stroke-width=".8"/><path d="M2.3 5c0 1.700 1.100 2.800 2.700 2.800S7.700 6.700 7.700 5M5 7.800v1.800" stroke="#555" stroke-width=".8" fill="none"/><path d="M1.300 1.200l7.400 8.800" stroke="#555" stroke-width=".8"/></svg>
<div class="abs" style="left:802.2px;top:316.0px;width:15.6px;height:15.6px;border-radius:50%;background:#ccdde2"></div>
<div class="t" style="left:800px;top:320.9px;width:20px;text-align:center;font-size:5.8px;font-weight:bold;color:#285a66">MS</div>
<div class="t" style="left:821.8px;top:320.9px;font-size:6.55px;color:#2c2c2c">Michal Stričík | PHF EU v Košiciach</div>
<svg class="abs" style="left:931.8px;top:319.3px" width="8.5" height="9.3" viewBox="0 0 10 11"><rect x="3.5" y="1" width="3" height="5.600" rx="1.500" fill="#3a3a3a"/><path d="M2.300 5c0 1.700 1.100 2.800 2.700 2.800S7.700 6.700 7.700 5M5 7.800v1.800" stroke="#3a3a3a" stroke-width=".8" fill="none"/></svg>
<div class="abs" style="left:802.2px;top:339.8px;width:15.6px;height:15.6px;border-radius:50%;background:#cfe3e8"></div>
<div class="t" style="left:800px;top:344.7px;width:20px;text-align:center;font-size:5.8px;font-weight:bold;color:#285a66">PM</div>
<div class="t" style="left:821.8px;top:344.7px;font-size:6.55px;color:#2c2c2c">Peter Matis - Biskup...</div>
<div class="t" style="left:891.3px;top:344.7px;font-size:6.55px;color:#2c2c2c">(Neoverené)</div>
<svg class="abs" style="left:931.8px;top:343.1px" width="8.5" height="9.3" viewBox="0 0 10 11"><rect x="3.7" y="1" width="2.6" height="5.2" rx="1.3" fill="none" stroke="#555" stroke-width=".8"/><path d="M2.3 5c0 1.700 1.100 2.800 2.700 2.800S7.700 6.700 7.700 5M5 7.800v1.800" stroke="#555" stroke-width=".8" fill="none"/><path d="M1.300 1.200l7.400 8.800" stroke="#555" stroke-width=".8"/></svg>
<div class="abs" style="left:802.2px;top:363.5px;width:15.6px;height:15.6px;border-radius:50%;background:#dbe6cf"></div>
<div class="t" style="left:800px;top:368.4px;width:20px;text-align:center;font-size:5.8px;font-weight:bold;color:#4a6a2a">PN</div>
<div class="t" style="left:821.8px;top:368.4px;font-size:6.55px;color:#2c2c2c">Peter Novák (Neoverené)</div>
<svg class="abs" style="left:931.8px;top:366.8px" width="8.5" height="9.3" viewBox="0 0 10 11"><rect x="3.7" y="1" width="2.6" height="5.2" rx="1.3" fill="none" stroke="#555" stroke-width=".8"/><path d="M2.3 5c0 1.700 1.100 2.800 2.700 2.800S7.700 6.700 7.700 5M5 7.800v1.800" stroke="#555" stroke-width=".8" fill="none"/><path d="M1.300 1.200l7.400 8.800" stroke="#555" stroke-width=".8"/></svg>
<div class="abs" style="left:802.2px;top:387.3px;width:15.6px;height:15.6px;border-radius:50%;background:#c8d5f0"></div>
<div class="t" style="left:800px;top:392.2px;width:20px;text-align:center;font-size:5.8px;font-weight:bold;color:#2a4a9a">RŠ</div>
<div class="t" style="left:821.8px;top:392.2px;font-size:6.55px;color:#2c2c2c">Riaditeľ školy</div>
<svg class="abs" style="left:931.8px;top:390.6px" width="8.5" height="9.3" viewBox="0 0 10 11"><rect x="3.5" y="1" width="3" height="5.600" rx="1.500" fill="#3a3a3a"/><path d="M2.300 5c0 1.700 1.100 2.800 2.700 2.800S7.700 6.700 7.700 5M5 7.800v1.800" stroke="#3a3a3a" stroke-width=".8" fill="none"/></svg>
<div class="abs" style="left:802.2px;top:411.1px;width:15.6px;height:15.6px;border-radius:50%;background:#d3ead6"></div>
<div class="t" style="left:800px;top:416.0px;width:20px;text-align:center;font-size:5.8px;font-weight:bold;color:#2f6a3a">S</div>
<div class="t" style="left:821.8px;top:416.0px;font-size:6.55px;color:#2c2c2c">Smižanský - Biskups...</div>
<div class="t" style="left:891.3px;top:416.0px;font-size:6.55px;color:#2c2c2c">(Neoverené)</div>
<svg class="abs" style="left:931.8px;top:414.4px" width="8.5" height="9.3" viewBox="0 0 10 11"><rect x="3.7" y="1" width="2.6" height="5.2" rx="1.3" fill="none" stroke="#555" stroke-width=".8"/><path d="M2.3 5c0 1.700 1.100 2.800 2.700 2.800S7.700 6.700 7.700 5M5 7.800v1.800" stroke="#555" stroke-width=".8" fill="none"/><path d="M1.300 1.200l7.400 8.800" stroke="#555" stroke-width=".8"/></svg>
<div class="abs" style="left:802.2px;top:434.8px;width:15.6px;height:15.6px;border-radius:50%;background:#f0cfe3"></div>
<div class="t" style="left:800px;top:439.7px;width:20px;text-align:center;font-size:5.8px;font-weight:bold;color:#8a2a6a">VB</div>
<div class="t" style="left:821.8px;top:439.7px;font-size:6.55px;color:#2c2c2c">Veronika Balková (Neoverené)</div>
<svg class="abs" style="left:931.8px;top:438.1px" width="8.5" height="9.3" viewBox="0 0 10 11"><rect x="3.7" y="1" width="2.6" height="5.2" rx="1.3" fill="none" stroke="#555" stroke-width=".8"/><path d="M2.3 5c0 1.700 1.100 2.800 2.700 2.800S7.700 6.700 7.700 5M5 7.800v1.800" stroke="#555" stroke-width=".8" fill="none"/><path d="M1.300 1.200l7.400 8.800" stroke="#555" stroke-width=".8"/></svg>
<div class="abs" style="left:936px;top:339.8px;width:16px;height:24.5px;border:1.2px solid #8cc63f;border-radius:3.5px;background:#fff"></div>
<div class="abs" style="left:939.6px;top:343.5px;width:6.8px;height:6.8px;border-radius:50%;background:#222"></div>
<svg class="abs" style="left:939.6px;top:343.5px" width="6.8" height="6.8" viewBox="0 0 7 7"><path d="M2 2l3 3M5 2L2 5" stroke="#fff" stroke-width="1" fill="none"/></svg>
<div class="abs" style="left:939.3px;top:353.4px;width:7.4px;height:7.4px;border-radius:2px;background:#2ba6b8"></div>
<div class="abs" style="left:940.9px;top:355px;width:4.200px;height:4.200px;border-radius:50%;border:1px solid #fff"></div>
<!-- ============ TASKBAR ============ -->
<div id="task" class="abs"></div>
<div class="abs" style="left:0;top:494.500px;width:24px;height:19.500px;background:#d2d2d2"></div>
<svg class="abs" style="left:7.500px;top:499.500px" width="9" height="9" viewBox="0 0 9 9"><path d="M0 1.300l3.900-.6v3.500H0zM4.400.6L9 0v4.200H4.400zM0 4.800h3.900v3.500L0 7.700zM4.400 4.800H9V9l-4.600-.6z" fill="#111"/></svg>
<div class="abs" style="left:24px;top:494.800px;width:142px;height:19.200px;background:#fdfdfd"></div>
<svg class="abs" style="left:29px;top:499.500px" width="9" height="10" viewBox="0 0 9 10"><circle cx="5.500" cy="3.600" r="2.600" stroke="#333" stroke-width=".9" fill="none"/><path d="M3.700 5.600L.8 8.800" stroke="#333" stroke-width=".9"/></svg>
<div class="t" style="left:44px;top:500.700px;font-size:7.200px;color:#3a3a3a">Hľadať</div>
<!-- explorer -->
<svg class="abs" style="left:174px;top:498px" width="12" height="12" viewBox="0 0 12 12"><path d="M.5 2.200h4l1 1.200h6v7.400H.5z" fill="#f6c544"/><path d="M.5 4.400h11v6.400H.5z" fill="#fbd766"/><rect x="3.800" y="7.300" width="4.400" height="3.500" fill="#3d8fd6"/><rect x="5" y="9" width="2" height="1.800" fill="#fbd766"/></svg>
<!-- outlook -->
<svg class="abs" style="left:197.500px;top:498px" width="13" height="12" viewBox="0 0 13 12"><path d="M4 1.500h8a.8.800 0 0 1 .8.800v7.400a.8.800 0 0 1-.8.800H4z" fill="#1e88e5"/><path d="M5 5l7.800-2v7.200a.8.800 0 0 1-.8.800H5z" fill="#4fc3f7"/><rect x=".5" y="3" width="7" height="7" rx=".8" fill="#0f5fb8"/><circle cx="4" cy="6.500" r="1.700" stroke="#fff" stroke-width="1" fill="none"/></svg>
<!-- chrome highlight -->
<div class="abs" style="left:216px;top:494.500px;width:24px;height:19.500px;background:#e9eae9"></div>
<svg class="abs" style="left:221.500px;top:497.700px" width="13" height="13" viewBox="0 0 13 13"><circle cx="6.500" cy="6.500" r="6" fill="#fbc116"/><path d="M6.500 6.500L1.300 3.500A6 6 0 0 1 11.700 3.500z" fill="#e33b2e"/><path d="M6.500 6.500L1.300 3.500A6 6 0 0 0 6.200 12.500l3-5.200z" fill="#2da94f"/><path d="M6.500.5a6 6 0 0 1 5.200 3H6.500z" fill="#e33b2e"/><circle cx="6.500" cy="6.500" r="2.900" fill="#fff"/><circle cx="6.500" cy="6.500" r="2.200" fill="#4285f4"/></svg>
<!-- word -->
<svg class="abs" style="left:246px;top:498px" width="13" height="12" viewBox="0 0 13 12"><rect x="3.500" y=".8" width="9" height="10.400" rx=".8" fill="#2b7cd3"/><rect x="3.500" y="6" width="9" height="5.200" fill="#185abd"/><rect x=".5" y="2.800" width="6.600" height="6.600" rx=".7" fill="#103f91"/><path d="M1.700 4.500l.9 3.200.9-3.200h.6l.9 3.200.9-3.200" stroke="#fff" stroke-width=".7" fill="none"/></svg>
<!-- paint -->
<svg class="abs" style="left:270px;top:497.500px" width="13" height="13" viewBox="0 0 13 13"><ellipse cx="5.800" cy="7.500" rx="5.200" ry="4.300" fill="#e8e8ee" stroke="#b5bccb" stroke-width=".5"/><circle cx="3.300" cy="6.500" r="1" fill="#e2574c"/><circle cx="5.300" cy="5.200" r="1" fill="#f1c232"/><circle cx="7.600" cy="5.600" r="1" fill="#4caf50"/><circle cx="4" cy="9" r="1" fill="#42a5f5"/><path d="M11.800.8L7 9.200l-1 .6.200-1.200z" fill="#d98b3a"/><path d="M11.800.8l.6.500-1.200 2z" fill="#7a5a3a"/></svg>
<div class="abs" style="left:216px;top:513px;width:24px;height:1px;background:#0a6cce"></div>
<div class="abs" style="left:242.500px;top:513px;width:20px;height:1px;background:#0a6cce"></div>
<div class="abs" style="left:266.500px;top:513px;width:20px;height:1px;background:#0a6cce"></div>
<!-- tray -->
<svg class="abs" style="left:811px;top:502px" width="6" height="5" viewBox="0 0 6 5"><path d="M.6 3.800L3 1.200l2.400 2.600" stroke="#333" stroke-width=".8" fill="none"/></svg>
<svg class="abs" style="left:820.500px;top:500px" width="10" height="9" viewBox="0 0 10 9"><path d="M2.600 7h5a1.800 1.800 0 0 0 .3-3.600A2.700 2.700 0 0 0 2.800 3 2 2 0 0 0 2.600 7z" stroke="#222" stroke-width=".8" fill="none"/><path d="M1.500 1l7 7" stroke="#222" stroke-width=".8"/></svg>
<div class="abs" style="left:833.700px;top:500.500px;width:7.400px;height:7.400px;border-radius:1.500px;border:1.200px solid #2aa3b5;background:#d9f1f4"></div>
<div class="abs" style="left:838.500px;top:505.500px;width:3.200px;height:3.200px;border-radius:50%;background:#f2b233"></div>
<svg class="abs" style="left:845px;top:500px" width="9" height="9" viewBox="0 0 9 9"><path d="M4.500.6c1 .7 2 .9 3.100 1v2.700c0 1.800-1.300 2.900-3.100 3.800C2.700 7.200 1.400 6.100 1.400 4.300V1.600C2.500 1.500 3.500 1.300 4.500.6z" stroke="#222" stroke-width=".7" fill="#fff"/><path d="M4.500 1v6.800M1.600 4.300h5.800" stroke="#222" stroke-width=".6"/></svg>
<div class="abs" style="left:850px;top:505.300px;width:3.500px;height:3.500px;border-radius:50%;background:#22a447"></div>
<svg class="abs" style="left:857.500px;top:500px" width="7" height="10" viewBox="0 0 7 10"><rect x="2" y=".5" width="3" height="5.500" rx="1.500" fill="#111"/><path d="M.9 4.500c0 1.600 1.100 2.600 2.600 2.600s2.600-1 2.600-2.600M3.500 7v1.800M2 8.900h3" stroke="#111" stroke-width=".8" fill="none"/></svg>
<svg class="abs" style="left:869px;top:500px" width="9" height="9" viewBox="0 0 9 9"><path d="M1 7.500a6.500 6.500 0 0 1 6.500-6.500M3 7.500A4.500 4.500 0 0 1 7.500 3M5 7.500A2.500 2.500 0 0 1 7.500 5" stroke="#777" stroke-width=".8" fill="none"/><path d="M1.500 8L8 1.500" stroke="#555" stroke-width=".6"/></svg>
<svg class="abs" style="left:880px;top:500px" width="9" height="9" viewBox="0 0 9 9"><path d="M.8 3.300h1.500L4.300 1.500v6L2.300 5.700H.8z" stroke="#222" stroke-width=".7" fill="none"/><path d="M5.500 3.300a1.600 1.600 0 0 1 0 2.400M6.600 2.300a3 3 0 0 1 0 4.400" stroke="#666" stroke-width=".6" fill="none"/></svg>
<div class="t" style="left:887.400px;top:496.600px;width:40px;text-align:center;font-size:6.100px;color:#222;transform:scaleX(.88)">15:16</div>
<div class="t" style="left:887.400px;top:505.600px;width:40px;text-align:center;font-size:6.100px;color:#222;transform:scaleX(.88)">20. 8. 2025</div>
<svg class="abs" style="left:929.500px;top:499px" width="10" height="9" viewBox="0 0 10 9"><path d="M1 .8h8v5.600H5.200L3.200 8.200V6.400H1z" fill="#222"/><path d="M2.500 2.400h5M2.500 3.800h5" stroke="#ddd" stroke-width=".5"/></svg>
<div class="abs" style="left:934.600px;top:503.500px;width:6.400px;height:6.400px;border-radius:50%;background:#e3e6e3;border:.6px solid #333;font-size:4.400px;line-height:5.400px;text-align:center;color:#222">4</div>

<!-- green frame -->
<div class="abs" style="left:0;top:0;width:1.100px;height:494px;background:#8cc63f"></div>
<div class="abs" style="left:0;top:493px;width:950px;height:1.100px;background:#8cc63f"></div>
<div class="abs" style="left:948.900px;top:0;width:1.100px;height:494px;background:#8cc63f"></div>
</div></body></html>
